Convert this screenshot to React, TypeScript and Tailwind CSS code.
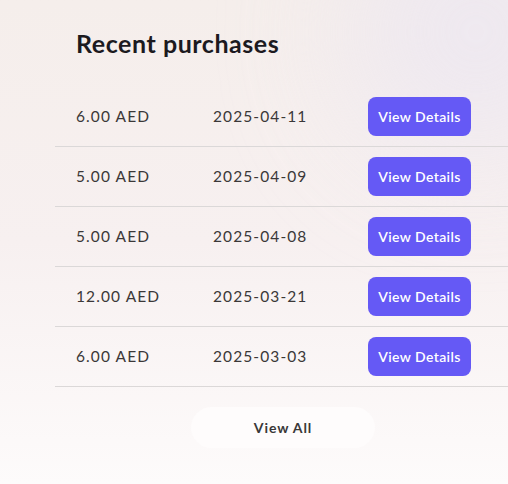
const purchases = [
  { amount: "6.00 AED", date: "2025-04-11" },
  { amount: "5.00 AED", date: "2025-04-09" },
  { amount: "5.00 AED", date: "2025-04-08" },
  { amount: "12.00 AED", date: "2025-03-21" },
  { amount: "6.00 AED", date: "2025-03-03" },
];

const App = () => {
  return (
    <div
      className="relative h-[484px] w-[508px] overflow-hidden bg-gradient-to-b from-[#f5eeeb] via-[#f7f0f0] to-[#fdfbfb]"
      style={{ fontFamily: "Lato, 'Open Sans', sans-serif" }}
    >
      {/* soft lilac glow top right */}
      <div className="pointer-events-none absolute -right-24 -top-24 h-64 w-64 rounded-full bg-[#ebe6f2] opacity-70 blur-3xl" />

      <div className="relative ml-[55px] w-[456px]">
        {/* Header */}
        <h2 className="pl-[21px] pt-[27px] text-[25px] font-bold leading-[32px] tracking-[0.55px] text-[#1c1a1f]">
          Recent purchases
        </h2>

        {/* Purchase rows */}
        <ul className="mt-[28px]">
          {purchases.map((p) => (
            <li
              key={p.date}
              className="flex h-[60px] items-center border-b border-[#dbd8d8] pl-[21px] text-[15.5px] tracking-[1.1px] text-[#3b3838]"
            >
              <span className="w-[137px]">{p.amount}</span>
              <span className="w-[155px]">{p.date}</span>
              <button className="h-[39px] w-[103px] rounded-lg bg-[#6559f5] text-[14px] font-semibold tracking-[0.4px] text-white">
                View Details
              </button>
            </li>
          ))}
        </ul>

        {/* View all */}
        <div className="mt-[20px] flex justify-center">
          <button className="h-[41px] w-[184px] rounded-full bg-[#fefcfc] text-[14px] font-bold tracking-[0.9px] text-[#3a3838]">
            View All
          </button>
        </div>
      </div>
    </div>
  );
};

export default App;
